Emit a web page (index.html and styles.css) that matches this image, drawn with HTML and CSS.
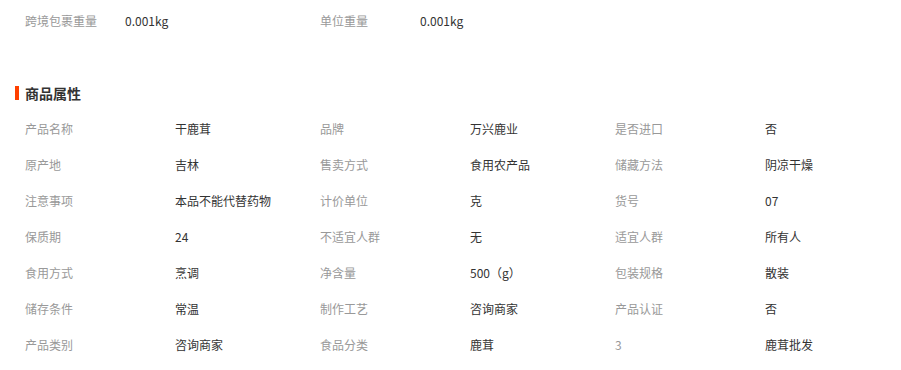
FILE: index.html
```html
<!DOCTYPE html>
<html lang="zh-CN">
<head>
<meta charset="utf-8">
<link rel="stylesheet" href="styles.css">
</head>
<body>
<div class="page">
  <div class="weights">
    <span class="lbl">跨境包裹重量</span><span class="val">0.001kg</span>
    <span class="lbl">单位重量</span><span class="val">0.001kg</span>
  </div>
  <h2 class="title">商品属性</h2>
  <div class="attrs">
    <span class="lbl">产品名称</span><span class="val">干鹿茸</span>
    <span class="lbl">品牌</span><span class="val">万兴鹿业</span>
    <span class="lbl">是否进口</span><span class="val">否</span>

    <span class="lbl">原产地</span><span class="val">吉林</span>
    <span class="lbl">售卖方式</span><span class="val">食用农产品</span>
    <span class="lbl">储藏方法</span><span class="val">阴凉干燥</span>

    <span class="lbl">注意事项</span><span class="val">本品不能代替药物</span>
    <span class="lbl">计价单位</span><span class="val">克</span>
    <span class="lbl">货号</span><span class="val">07</span>

    <span class="lbl">保质期</span><span class="val">24</span>
    <span class="lbl">不适宜人群</span><span class="val">无</span>
    <span class="lbl">适宜人群</span><span class="val">所有人</span>

    <span class="lbl">食用方式</span><span class="val">烹调</span>
    <span class="lbl">净含量</span><span class="val">500（g）</span>
    <span class="lbl">包装规格</span><span class="val">散装</span>

    <span class="lbl">储存条件</span><span class="val">常温</span>
    <span class="lbl">制作工艺</span><span class="val">咨询商家</span>
    <span class="lbl">产品认证</span><span class="val">否</span>

    <span class="lbl">产品类别</span><span class="val">咨询商家</span>
    <span class="lbl">食品分类</span><span class="val">鹿茸</span>
    <span class="lbl">3</span><span class="val">鹿茸批发</span>
  </div>
</div>
</body>
</html>
```
FILE: styles.css
```css
html, body {
  margin: 0;
  padding: 0;
  background: #fff;
}
.page {
  font-family: "Noto Sans CJK SC", "Liberation Sans", sans-serif;
  font-size: 12px;
  color: #333;
}
.weights {
  display: grid;
  grid-template-columns: 100px 195px 100px 195px;
  padding: 3px 0 0 25px;
  line-height: 36px;
}
.lbl {
  color: #999;
  white-space: nowrap;
}
.val {
  color: #333;
  white-space: nowrap;
}
.title {
  margin: 44px 0 0 15px;
  font-size: 14px;
  font-weight: bold;
  line-height: 20px;
  height: 20px;
  color: #333;
  display: flex;
  align-items: center;
  gap: 6px;
}
.title::before {
  content: "";
  width: 4px;
  height: 14px;
  background: #ff4000;
}
.attrs {
  display: grid;
  grid-template-columns: 150px 145px 150px 145px 150px 145px;
  padding: 8px 0 0 25px;
  line-height: 36px;
}
```
